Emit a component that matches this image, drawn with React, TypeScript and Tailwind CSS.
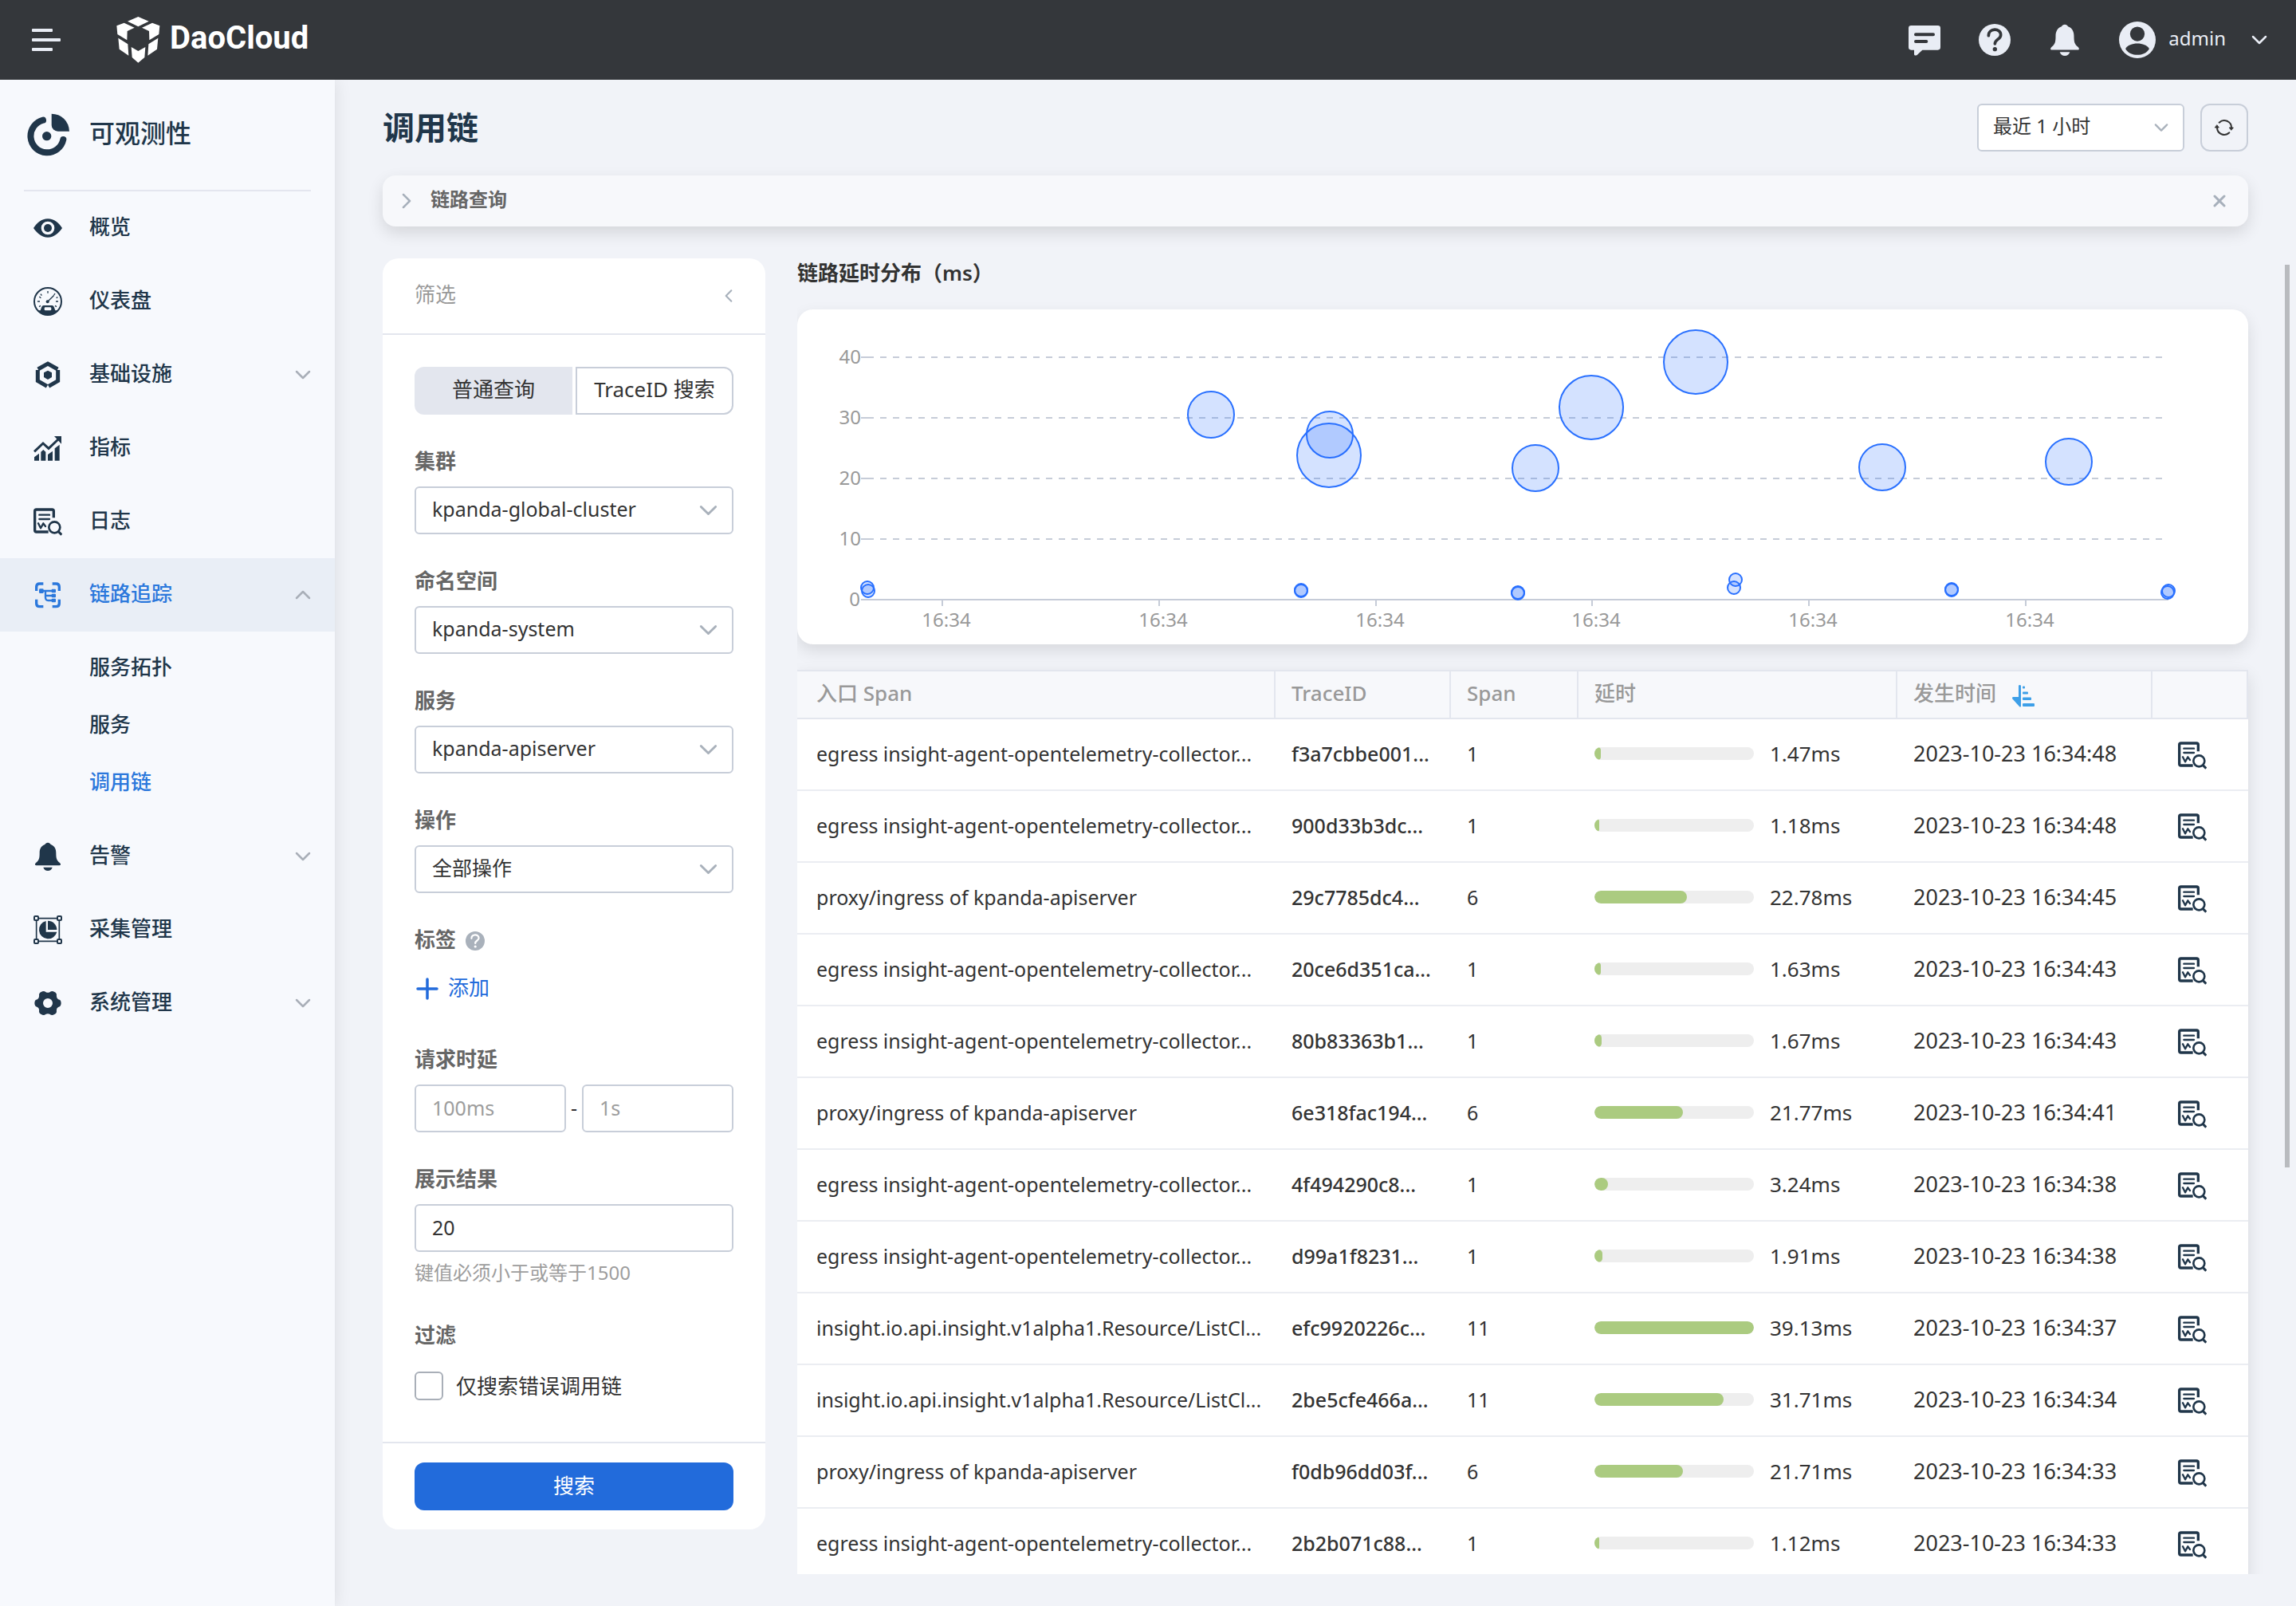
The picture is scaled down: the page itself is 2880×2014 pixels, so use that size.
import React from "react";

const rows = [
  { name: "egress insight-agent-opentelemetry-collector...", trace: "f3a7cbbe001...", spans: 1, ms: 1.47, time: "2023-10-23 16:34:48" },
  { name: "egress insight-agent-opentelemetry-collector...", trace: "900d33b3dc...", spans: 1, ms: 1.18, time: "2023-10-23 16:34:48" },
  { name: "proxy/ingress of kpanda-apiserver", trace: "29c7785dc4...", spans: 6, ms: 22.78, time: "2023-10-23 16:34:45" },
  { name: "egress insight-agent-opentelemetry-collector...", trace: "20ce6d351ca...", spans: 1, ms: 1.63, time: "2023-10-23 16:34:43" },
  { name: "egress insight-agent-opentelemetry-collector...", trace: "80b83363b1...", spans: 1, ms: 1.67, time: "2023-10-23 16:34:43" },
  { name: "proxy/ingress of kpanda-apiserver", trace: "6e318fac194...", spans: 6, ms: 21.77, time: "2023-10-23 16:34:41" },
  { name: "egress insight-agent-opentelemetry-collector...", trace: "4f494290c8...", spans: 1, ms: 3.24, time: "2023-10-23 16:34:38" },
  { name: "egress insight-agent-opentelemetry-collector...", trace: "d99a1f8231...", spans: 1, ms: 1.91, time: "2023-10-23 16:34:38" },
  { name: "insight.io.api.insight.v1alpha1.Resource/ListCl...", trace: "efc9920226c...", spans: 11, ms: 39.13, time: "2023-10-23 16:34:37" },
  { name: "insight.io.api.insight.v1alpha1.Resource/ListCl...", trace: "2be5cfe466a...", spans: 11, ms: 31.71, time: "2023-10-23 16:34:34" },
  { name: "proxy/ingress of kpanda-apiserver", trace: "f0db96dd03f...", spans: 6, ms: 21.71, time: "2023-10-23 16:34:33" },
  { name: "egress insight-agent-opentelemetry-collector...", trace: "2b2b071c88...", spans: 1, ms: 1.12, time: "2023-10-23 16:34:33" },
];

const maxMs = 39.13;

function Chevron({ className }: { className?: string }) {
  return (
    <svg viewBox="0 0 20 12" fill="none" stroke="currentColor" strokeWidth="2.5" strokeLinecap="round" strokeLinejoin="round" className={className} aria-hidden="true">
      <path d="M2 2l8 8 8-8" />
    </svg>
  );
}

function Glyph({ children, className = "size-9" }: { children: React.ReactNode; className?: string }) {
  return (
    <svg viewBox="0 0 108 108" fill="currentColor" className={className} aria-hidden="true">
      {children}
    </svg>
  );
}

function EyeIcon() {
  return (
    <Glyph>
      <path fillRule="evenodd" d="M0 54C12 36 30 19 54 19s42 17 54 35C96 72 78 89 54 89S12 72 0 54zM54 29a25 25 0 1 0 0 50 25 25 0 0 0 0-50z" />
      <circle cx="54" cy="54" r="15" />
    </Glyph>
  );
}

function GaugeIcon() {
  return (
    <Glyph>
      <circle cx="54" cy="54" r="51" fill="none" stroke="currentColor" strokeWidth="6" />
      <path d="M54 15v8M27 26l4 6M81 24l-4 6M22 36l6 5M86 41l5-3M15 54h9M84 54h9M21 74l6-4M87 74l-6-4" stroke="currentColor" strokeWidth="4" />
      <path d="M54 54l22-22" stroke="currentColor" strokeWidth="4" strokeLinecap="round" />
      <circle cx="53" cy="55" r="6" />
      <path fillRule="evenodd" d="M14 88h12l5-14q2-5 7-5h32q5 0 7 5l5 14h12Q78 106 54 106T14 88zM45 76q-4 0-4 4v4q0 4 4 4h18q4 0 4-4v-4q0-4-4-4z" />
    </Glyph>
  );
}

function InfraIcon() {
  return (
    <Glyph>
      <g fill="none" stroke="currentColor" strokeWidth="15">
        <path d="M17 33l37-21 37 21" />
        <path d="M16 36v41l35 20" />
        <path d="M92 36v41l-35 20" />
      </g>
      <path d="M54 38l15 8v17l-15 9-15-9V46z" />
    </Glyph>
  );
}

function MetricsIcon() {
  return (
    <Glyph>
      <path d="M3 67l33-31 21 19 36-34" fill="none" stroke="currentColor" strokeWidth="9" />
      <path d="M78 9h27v29z" />
      <path d="M3 88l18-14v27H3zM28 68l9-8 9 8v33H28zM54 78l18-13v36H54zM80 55l18-14v60H80z" />
    </Glyph>
  );
}

function LogIcon() {
  return (
    <Glyph>
      <g fill="none" stroke="currentColor" strokeWidth="10" strokeLinecap="butt">
        <path d="M76 40V15q0-6-6-6H11q-6 0-6 6v72q0 6 6 6h45" />
        <g strokeWidth="7" strokeLinecap="round">
          <path d="M22 29h38M22 45h38" />
        </g>
        <path d="M18 61l9 18 10-18 8 11" strokeWidth="7" strokeLinecap="round" strokeLinejoin="round" />
        <circle cx="79" cy="76" r="21" strokeWidth="8" />
        <path d="M94 92l12 12" strokeWidth="9" />
      </g>
    </Glyph>
  );
}

function TraceIcon() {
  return (
    <Glyph>
      <g fill="none" stroke="currentColor" strokeWidth="10">
        <path d="M11 39V24q0-12 12-12h14M71 12h14q12 0 12 12v15M97 71v15q0 12-12 12H71M37 98H23Q11 98 11 86V71" />
        <path d="M30 39h46M45 41v22q0 12 10 12h21M45 57h31" strokeWidth="7" />
      </g>
      <rect x="21" y="31" width="17" height="17" rx="4" />
      <rect x="68" y="32" width="16" height="14" rx="3" />
      <rect x="68" y="50" width="16" height="14" rx="3" />
      <rect x="68" y="68" width="16" height="14" rx="3" />
    </Glyph>
  );
}

function BellIcon({ className }: { className?: string }) {
  return (
    <Glyph className={className}>
      <path d="M54 2c5 0 9 3 11 7 14 5 20 17 20 32 0 20 2 28 14 37 5 5 4 10-2 10H11c-6 0-7-5-2-10 12-9 14-17 14-37 0-15 6-27 20-32 2-4 6-7 11-7z" />
      <path d="M37 95h34c-2 8-9 13-17 13s-15-5-17-13z" />
    </Glyph>
  );
}

function CollectIcon() {
  return (
    <Glyph>
      <g fill="none" stroke="currentColor" strokeWidth="5">
        <path d="M20 11h68M20 97h68M11 20v68M97 20v68" />
        <rect x="3" y="3" width="15" height="15" rx="3" strokeWidth="6" />
        <rect x="90" y="3" width="15" height="15" rx="3" strokeWidth="6" />
        <rect x="3" y="90" width="15" height="15" rx="3" strokeWidth="6" />
        <rect x="90" y="90" width="15" height="15" rx="3" strokeWidth="6" />
      </g>
      <path d="M47 21v41h41A34 34 0 1 1 47 21z" />
      <path d="M54 20a34 34 0 0 1 34 34H54z" />
    </Glyph>
  );
}

function GearIcon() {
  return (
    <Glyph>
      <path
        fillRule="evenodd"
        d="M36 9q7 0 11 4 7 3 14 0 4-4 11-4 13 3 15 12-1 10 2 14 3 5 11 7 4 4 4 12t-4 12q-8 2-11 7-3 4-2 14-2 9-15 12-7 0-11-4-7-3-14 0-4 4-11 4-13-3-15-12 1-10-2-14-3-5-11-7-4-4-4-12t4-12q8-2 11-7 3-4 2-14 2-9 15-12zM54 36a18 18 0 1 0 0 36 18 18 0 0 0 0-36z"
      />
    </Glyph>
  );
}

function HelpIcon({ className, mark }: { className: string; mark: string }) {
  return (
    <svg viewBox="0 0 120 120" className={className} aria-hidden="true">
      <circle cx="60" cy="60" r="60" fill="currentColor" />
      <path d="M37 44c0-30 46-29 46-3 0 18-22 15-22 34" fill="none" stroke={mark} strokeWidth="11" strokeLinecap="round" />
      <circle cx="61" cy="95" r="8" fill={mark} />
    </svg>
  );
}

function Brand() {
  return (
    <a href="#" className="ml-[74px] flex items-center gap-3 text-white">
      <svg viewBox="0 0 165 174" className="h-[58px] w-[55px]" fill="currentColor" aria-hidden="true">
        <path d="M42 17L82 0l40 17-40 20zM1 34l28-11 39 18-27 13-1 34L4 66zM163 34l-28-11-39 18 27 13 1 34 36-22zM7 80l36 23 3 43-35-24zM157 80l-36 23-3 43 35-24zM56 114l26 15 27-15-3 39-24 20-23-20z" />
      </svg>
      <span className="pb-1 font-['Roboto',sans-serif] text-[40px] leading-[48px] font-bold">DaoCloud</span>
    </a>
  );
}

function Header() {
  return (
    <header className="relative z-20 flex h-[100px] shrink-0 items-center bg-[#34373b] pr-9 pl-10 text-[#e9edf5]">
      <button type="button" aria-label="菜单" className="flex h-10 w-8 items-center">
        <svg viewBox="0 0 36 28" className="h-7 w-9 shrink-0" fill="currentColor" aria-hidden="true">
          <rect width="26" height="4" rx="1" />
          <rect y="12" width="36" height="4" rx="1" />
          <rect y="24" width="26" height="4" rx="1" />
        </svg>
      </button>
      <Brand />
      <div className="ml-auto flex items-center">
        <button type="button" aria-label="消息" className="mr-12">
          <svg viewBox="0 0 120 120" className="size-10" aria-hidden="true">
            <path d="M10 6h100q10 0 10 10v72q0 10-10 10H52l-20 19q-10 4-11-2V98H10Q0 98 0 88V16Q0 6 10 6z" fill="currentColor" />
            <path d="M27 40h66M27 66h40" stroke="#34373b" strokeWidth="12" strokeLinecap="round" />
          </svg>
        </button>
        <button type="button" aria-label="帮助" className="mr-12">
          <HelpIcon className="size-10" mark="#34373b" />
        </button>
        <button type="button" aria-label="通知" className="mr-12">
          <BellIcon className="size-10" />
        </button>
        <button type="button" className="flex items-center">
          <svg viewBox="0 0 136 136" className="size-[46px]" aria-hidden="true">
            <circle cx="68" cy="68" r="68" fill="currentColor" />
            <circle cx="68" cy="46" r="27" fill="#34373b" />
            <path d="M24 101c14-26 74-26 88 0-16 30-72 30-88 0z" fill="#34373b" />
          </svg>
          <span className="ml-4 pb-1 text-[24px] leading-9">admin</span>
          <Chevron className="ml-8 h-3 w-5" />
        </button>
      </div>
    </header>
  );
}

type NavEntry = { label: string; icon: React.ReactNode; arrow?: "up" | "down"; active?: boolean; children?: { label: string; active?: boolean }[] };

const nav: NavEntry[] = [
  { label: "概览", icon: <EyeIcon /> },
  { label: "仪表盘", icon: <GaugeIcon /> },
  { label: "基础设施", icon: <InfraIcon />, arrow: "down" },
  { label: "指标", icon: <MetricsIcon /> },
  { label: "日志", icon: <LogIcon /> },
  {
    label: "链路追踪",
    icon: <TraceIcon />,
    arrow: "up",
    active: true,
    children: [{ label: "服务拓扑" }, { label: "服务" }, { label: "调用链", active: true }],
  },
  { label: "告警", icon: <BellIcon className="size-9" />, arrow: "down" },
  { label: "采集管理", icon: <CollectIcon /> },
  { label: "系统管理", icon: <GearIcon />, arrow: "down" },
];

function Sidebar() {
  return (
    <aside className="relative z-10 w-[420px] shrink-0 bg-[#f7f9fd] text-[#20364a] shadow-[0_0_20px_rgba(0,0,0,0.10)]">
      <div className="mx-[30px] flex h-[140px] items-center border-b-2 border-[#e4e6ef]">
        <svg viewBox="0 0 162 162" className="ml-1 size-[54px]" aria-hidden="true">
          <path d="M60 26A62 62 0 1 0 136 99" fill="none" stroke="currentColor" strokeWidth="24" strokeLinecap="round" />
          <circle cx="74" cy="86" r="17" fill="currentColor" />
          <path d="M92 2a67 67 0 0 1 67 66h-43a24 24 0 0 1-24-24z" fill="currentColor" />
        </svg>
        <span className="ml-6 pb-1 text-[32px] leading-[48px] font-medium">可观测性</span>
      </div>
      <nav className="text-[26px] leading-9 font-medium">
        {nav.map((item) => (
          <div key={item.label}>
            <a
              href="#"
              className={
                item.active
                  ? "flex h-[92px] items-center bg-[#e9eef6] pr-[30px] pl-[42px] text-[#2b78dc]"
                  : "flex h-[92px] items-center pr-[30px] pl-[42px]"
              }
            >
              {item.icon}
              <span className="ml-[34px] flex-1 pb-1">{item.label}</span>
              {item.arrow && <Chevron className={item.arrow === "up" ? "h-3 w-5 rotate-180 text-[#a9afb8]" : "h-3 w-5 text-[#a9afb8]"} />}
            </a>
            {item.children && (
              <div className="pt-2 pb-3">
                {item.children.map((c) => (
                  <a key={c.label} href="#" className={c.active ? "flex h-[72px] items-center pl-28 text-[#2b78dc]" : "flex h-[72px] items-center pl-28"}>
                    {c.label}
                  </a>
                ))}
              </div>
            )}
          </div>
        ))}
      </nav>
    </aside>
  );
}

const labelClass = "block pb-1 text-[26px] leading-9 font-semibold text-[#666]";
const inputClass = "h-[60px] w-full min-w-0 rounded-md border-2 border-[#c8ced9] bg-white px-5 pb-0.5 text-[25px] text-[#333] placeholder:text-[#9d9d9d]";

function SelectField({ id, label, value }: { id: string; label: string; value: string }) {
  return (
    <div className="mt-10">
      <label htmlFor={id} className={labelClass}>
        {label}
      </label>
      <div className="relative mt-2.5">
        <select id={id} defaultValue={value} className="h-[60px] w-full appearance-none rounded-md border-2 border-[#c8ced9] bg-white pr-14 pb-0.5 pl-5 text-[25px] text-[#333]">
          <option>{value}</option>
        </select>
        <Chevron className="pointer-events-none absolute top-[23px] right-5 h-3.5 w-[23px] text-[#a9b1bb]" />
      </div>
    </div>
  );
}

function FilterPanel() {
  return (
    <form className="w-[480px] shrink-0 self-start rounded-[20px] bg-white" onSubmit={(e) => e.preventDefault()}>
      <div className="flex h-24 items-center justify-between border-b-2 border-[#e3e6ee] pr-9 pl-10">
        <h2 className="pb-1 text-[26px] leading-9 text-[#999]">筛选</h2>
        <button type="button" aria-label="收起" className="flex size-5 items-center justify-center text-[#a7b0bb]">
          <Chevron className="h-2.5 w-[18px] shrink-0 rotate-90" />
        </button>
      </div>
      <div className="px-10 pt-10 pb-[50px]">
        <div className="grid grid-cols-2 gap-1 text-[26px] leading-9 text-[#333]">
          <button type="button" className="h-[60px] rounded-l-xl bg-[#e3e6ee] pb-1">
            普通查询
          </button>
          <button type="button" className="h-[60px] rounded-r-xl border-2 border-[#c8ced9] pb-1 whitespace-nowrap">
            TraceID 搜索
          </button>
        </div>
        <SelectField id="cluster" label="集群" value="kpanda-global-cluster" />
        <SelectField id="namespace" label="命名空间" value="kpanda-system" />
        <SelectField id="service" label="服务" value="kpanda-apiserver" />
        <SelectField id="operation" label="操作" value="全部操作" />
        <div className="mt-10">
          <div className="flex items-center gap-3">
            <span className={labelClass}>标签</span>
            <HelpIcon className="size-6 text-[#a9b1bb]" mark="#fff" />
          </div>
          <button type="button" className="mt-2.5 flex h-[60px] items-center text-[26px] leading-9 text-[#226bdb]">
            <svg viewBox="0 0 30 30" className="size-[30px]" stroke="currentColor" strokeWidth="3.5" strokeLinecap="round" aria-hidden="true">
              <path d="M16 3v24M4 15h24" />
            </svg>
            <span className="ml-3 pb-1">添加</span>
          </button>
        </div>
        <fieldset className="mt-10">
          <legend className={labelClass}>请求时延</legend>
          <div className="mt-2.5 flex items-center text-[25px] text-[#333]">
            <input aria-label="最小时延" placeholder="100ms" className={inputClass} />
            <span className="w-5 shrink-0 text-center">-</span>
            <input aria-label="最大时延" placeholder="1s" className={inputClass} />
          </div>
        </fieldset>
        <div className="mt-10">
          <label htmlFor="limit" className={labelClass}>
            展示结果
          </label>
          <input id="limit" defaultValue="20" className={`mt-2.5 ${inputClass}`} />
          <p className="mt-1.5 text-[24px] leading-10 text-[#9d9d9d]">键值必须小于或等于1500</p>
        </div>
        <div className="mt-10">
          <span className={labelClass}>过滤</span>
          <label className="mt-[22px] flex items-center gap-4 text-[26px] leading-10 text-[#333]">
            <input type="checkbox" className="size-9 appearance-none rounded-md border-2 border-[#a9afb8] bg-white" />
            仅搜索错误调用链
          </label>
        </div>
      </div>
      <div className="border-t-2 border-[#e3e6ee] px-10 py-6">
        <button type="submit" className="h-[60px] w-full rounded-xl bg-[#226bdb] pb-0.5 text-[26px] leading-9 text-white">
          搜索
        </button>
      </div>
    </form>
  );
}

const gridLines = [
  { label: "40", y: 60 },
  { label: "30", y: 136 },
  { label: "20", y: 212 },
  { label: "10", y: 288 },
];
const xTicks = [182, 454, 726, 997, 1269, 1541];
const bubbles = [
  [519, 132, 29],
  [668, 157, 29],
  [667, 183, 40],
  [926, 199, 29],
  [996, 123, 40],
  [1127, 66, 40],
  [1361, 198, 29],
  [1595, 191, 29],
  [88, 349, 8],
  [89, 353, 8],
  [632, 352, 8],
  [632, 353, 8],
  [904, 355, 8],
  [904, 356, 8],
  [1177, 339, 8],
  [1175, 349, 8],
  [1448, 351, 8],
  [1448, 352, 8],
  [1720, 353, 8],
  [1719, 355, 8],
];

function LatencyChart() {
  return (
    <div className="mt-6 rounded-[20px] bg-white shadow-[0_8px_20px_rgba(0,0,0,0.11)]">
      <svg viewBox="0 0 1820 420" className="block w-full" role="img" aria-label="链路延时分布">
        <g stroke="#c6ccd8" strokeWidth="2">
          {gridLines.map((g) => (
            <g key={g.label}>
              <path d={`M80 ${g.y}H88`} />
              <path d={`M88 ${g.y}H1712`} strokeDasharray="8 8" />
            </g>
          ))}
          <path d="M80 364H1720" />
          {xTicks.map((x) => (
            <path key={x} d={`M${x} 364V372`} />
          ))}
        </g>
        <g fill="#999" fontSize="24">
          {gridLines.map((g) => (
            <text key={g.label} x="80" y={g.y + 8} textAnchor="end">
              {g.label}
            </text>
          ))}
          <text x="79" y="372" textAnchor="end">
            0
          </text>
          {xTicks.map((x) => (
            <text key={x} x={x + 5} y="398" textAnchor="middle">
              16:34
            </text>
          ))}
        </g>
        <g fill="#2970ff" fillOpacity="0.2" stroke="#2970ff" strokeWidth="2">
          {bubbles.map(([cx, cy, r], i) => (
            <circle key={i} cx={cx} cy={cy} r={r} />
          ))}
        </g>
      </svg>
    </div>
  );
}

function SortIcon() {
  return (
    <svg viewBox="0 0 28 28" className="size-7 text-[#3d9fe8]" fill="currentColor" aria-hidden="true">
      <path d="M8 1q0-1 1.500-1T11 1v26q-1 1-2 0L0 17q0-2 1-2h7z" />
      <rect x="13" y="1.500" width="3" height="3" rx="1" />
      <rect x="13" y="8.500" width="7" height="3" rx="1" />
      <rect x="13" y="15.500" width="11" height="3.500" rx="1" />
      <rect x="13" y="23" width="15" height="4" rx="1" />
    </svg>
  );
}

const th = "h-[62px] border-y-2 border-r-2 border-[#e3e6ee] px-5 pb-1 text-left font-medium";
const td = "h-[90px] border-b-2 border-[#ebedf2] px-5 pb-0.5";

function TraceTable() {
  return (
    <table className="mt-8 w-full table-fixed border-separate border-spacing-0 bg-white leading-9 shadow-[0_8px_20px_rgba(0,0,0,0.11)]">
      <colgroup>
        <col />
        <col className="w-[220px]" />
        <col className="w-[160px]" />
        <col className="w-[400px]" />
        <col className="w-[320px]" />
        <col className="w-[120px]" />
      </colgroup>
      <thead className="bg-[#f7f8fb] text-[26px] text-[#999]">
        <tr>
          <th className={`${th} pl-6`}>入口 Span</th>
          <th className={th}>TraceID</th>
          <th className={th}>Span</th>
          <th className={th}>延时</th>
          <th className={th}>
            <button type="button" className="flex items-end gap-5">
              发生时间
              <SortIcon />
            </button>
          </th>
          <th className={th} aria-label="操作" />
        </tr>
      </thead>
      <tbody className="text-[25px] text-[#333]">
        {rows.map((r, i) => (
          <tr key={i}>
            <td className={`${td} pl-6 whitespace-nowrap`}>{r.name}</td>
            <td className={`${td} font-medium whitespace-nowrap`}>
              <a href="#">{r.trace}</a>
            </td>
            <td className={td}>{r.spans}</td>
            <td className={td}>
              <div className="flex items-center gap-5">
                <div className="h-4 w-[200px] overflow-hidden rounded-full bg-[#eee]">
                  <div className="h-full rounded-full bg-[#abcb80]" style={{ width: `${(r.ms / maxMs) * 100}%` }} />
                </div>
                <span className="text-[26px]">{r.ms}ms</span>
              </div>
            </td>
            <td className={`${td} text-[27px] whitespace-nowrap`}>{r.time}</td>
            <td className="h-[90px] border-b-2 border-[#ebedf2] pt-0.5 pl-8 text-[#20364a]">
              <button type="button" aria-label="查看日志" className="block">
                <LogIcon />
              </button>
            </td>
          </tr>
        ))}
      </tbody>
    </table>
  );
}

export default function App() {
  return (
    <div lang="zh-CN" className="flex h-screen flex-col overflow-hidden bg-[#f1f3f8] font-['Noto_Sans','Noto_Sans_CJK_SC',sans-serif]">
      <Header />
      <div className="flex min-h-0 flex-1">
        <Sidebar />
        <main className="flex min-w-0 flex-1 flex-col pt-[30px] pb-10 pl-[60px]">
          <div className="mr-[60px] flex h-[60px] shrink-0 items-center">
            <h1 className="text-[40px] leading-[60px] font-bold text-[#20364a]">调用链</h1>
            <div className="relative ml-auto w-[260px]">
              <select aria-label="时间范围" defaultValue="最近 1 小时" className="h-[60px] w-full appearance-none rounded-md border-2 border-[#c8ced9] bg-white pr-12 pb-1 pl-[18px] text-[24px] text-[#333]">
                <option>最近 1 小时</option>
              </select>
              <Chevron className="pointer-events-none absolute top-6 right-5 h-3 w-[18px] text-[#a9b1bb]" />
            </div>
            <button type="button" aria-label="刷新" className="ml-5 flex size-[60px] items-center justify-center rounded-xl border-2 border-[#c8ced9] text-[#333]">
              <svg viewBox="0 0 72 72" className="size-6" fill="none" stroke="currentColor" strokeWidth="6" strokeLinecap="round" aria-hidden="true">
                <path d="M17 17A27 27 0 0 1 63 36" />
                <path d="M55 55A27 27 0 0 1 9 36" />
                <path d="M56 36h14l-7 9zM2 36h14l-7-9z" fill="currentColor" strokeWidth="3" strokeLinejoin="round" />
              </svg>
            </button>
          </div>
          <section className="mt-[30px] mr-[60px] flex h-16 shrink-0 items-center rounded-2xl bg-[#f7f8fb] pr-7 pl-5 shadow-[0_8px_20px_rgba(0,0,0,0.12)]">
            <button type="button" aria-label="展开" className="flex size-5 items-center justify-center text-[#a7b0bb]">
              <Chevron className="h-3 w-5 shrink-0 -rotate-90" />
            </button>
            <h2 className="ml-5 pb-1 text-[24px] leading-9 font-semibold text-[#666]">链路查询</h2>
            <button type="button" aria-label="关闭" className="ml-auto text-[#a7b0bb]">
              <svg viewBox="0 0 16 16" className="size-4" stroke="currentColor" strokeWidth="3" strokeLinecap="round" aria-hidden="true">
                <path d="M2 2l12 12M14 2L2 14" />
              </svg>
            </button>
          </section>
          <div className="relative mt-10 flex min-h-0 flex-1">
            <FilterPanel />
            <section className="ml-10 min-w-0 flex-1 overflow-hidden pr-[60px]">
              <h2 className="pb-1 text-[26px] leading-9 font-semibold text-[#333]">链路延时分布（ms）</h2>
              <LatencyChart />
              <TraceTable />
            </section>
            <div className="absolute top-2 right-2 h-[1132px] w-1.5 bg-[#b9bbbf]" />
          </div>
        </main>
      </div>
    </div>
  );
}
